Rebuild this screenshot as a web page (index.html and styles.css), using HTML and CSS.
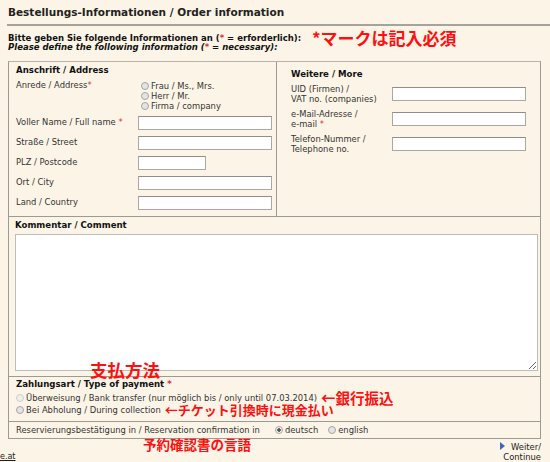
FILE: index.html
```html
<!DOCTYPE html>
<html lang="de">
<head>
    <meta charset="UTF-8">
    <title>Bestellungs-Informationen</title>
    <link rel="stylesheet" href="styles.css">
</head>
<body>
    <h1 class="title">Bestellungs-Informationen / Order information</h1>
    <div class="intro">
        <p>Bitte geben Sie folgende Informationen an (<span class="req">*</span> = erforderlich):</p>
        <p class="en">Please define the following information (<span class="req">*</span> = necessary):</p>
        <span class="note note-req">*マークは記入必須</span>
    </div>

    <div class="box">
        <div class="top">
            <div class="address">
                <h2>Anschrift / Address</h2>
                <div class="field salutation">
                    <label>Anrede / Address<span class="req">*</span></label>
                    <div class="options">
                        <div class="opt"><span class="radio"></span>Frau / Ms., Mrs.</div>
                        <div class="opt"><span class="radio"></span>Herr / Mr.</div>
                        <div class="opt"><span class="radio"></span>Firma / company</div>
                    </div>
                </div>
                <div class="field"><label>Voller Name / Full name <span class="req">*</span></label><input type="text"></div>
                <div class="field"><label>Straße / Street</label><input type="text"></div>
                <div class="field"><label>PLZ / Postcode</label><input type="text" class="short"></div>
                <div class="field"><label>Ort / City</label><input type="text"></div>
                <div class="field"><label>Land / Country</label><input type="text"></div>
            </div>
            <div class="more">
                <h2>Weitere / More</h2>
                <div class="field"><label>UID (Firmen) /<br>VAT no. (companies)</label><input type="text"></div>
                <div class="field"><label>e-Mail-Adresse /<br>e-mail <span class="req">*</span></label><input type="text"></div>
                <div class="field"><label>Telefon-Nummer /<br>Telephone no.</label><input type="text"></div>
            </div>
        </div>

        <div class="comment">
            <h2>Kommentar / Comment</h2>
            <textarea></textarea>
        </div>

        <div class="payment">
            <span class="note note-pay">支払方法</span>
            <h2>Zahlungsart / Type of payment <span class="req">*</span></h2>
            <div class="opt disabled"><span class="radio"></span>Überweisung / Bank transfer (nur möglich bis / only until 07.03.2014)<span class="note-inline big">←銀行振込</span></div>
            <div class="opt"><span class="radio"></span>Bei Abholung / During collection<span class="note-inline">←チケット引換時に現金払い</span></div>
        </div>

        <div class="confirm">
            <span class="confirm-label">Reservierungsbestätigung in / Reservation confirmation in</span>
            <span class="opt"><span class="radio checked"></span>deutsch</span>
            <span class="opt"><span class="radio"></span>english</span>
            <span class="note note-lang">予約確認書の言語</span>
        </div>
    </div>

    <div class="footer">
        <a href="#" class="link">e.at</a>
        <a href="#" class="next"><span class="arrow"></span>Weiter/<br>Continue</a>
    </div>
</body>
</html>
```

FILE: styles.css
```css
body {
    margin: 0;
    background-color: #fcf5e7;
    font-family: "DejaVu Sans", Verdana, sans-serif;
    font-size: 8.4px;
    color: #333;
}
.title {
    margin: 0 0 0 7px;
    padding: 6px 0 6px 1px;
    font-size: 10.5px;
    color: #222;
    border-bottom: 2px solid #a6a39d;
}
.intro {
    position: relative;
    margin: 8px 8px 0;
    font-size: 8.5px;
    font-weight: bold;
    color: #111;
}
.intro p {
    margin: 0;
    line-height: 9px;
}
.intro .en {
    font-style: italic;
}
.req {
    color: #e0303a;
}
.note, .note-inline {
    font-family: "Noto Sans CJK JP", sans-serif;
    font-weight: bold;
    color: #ff1010;
}
.note {
    position: absolute;
    white-space: nowrap;
}
.note-req {
    left: 304px;
    top: -9px;
    font-size: 17px;
}

.box {
    margin: 9px 9px 0 8px;
    border: 1px solid #9c9a95;
    border-top-color: #b5b2ab;
}
h2 {
    margin: 0;
    font-size: 8.6px;
    color: #111;
}
.top {
    display: grid;
    grid-template-columns: 268px 1fr;
    height: 154px;
    border-bottom: 1px solid #9c9a95;
}
.address {
    padding: 3px 0 0 7px;
    border-right: 1px solid #9c9a95;
}
.more {
    padding: 7px 0 0 14px;
}
.field {
    display: flex;
    align-items: flex-start;
    margin-top: 6px;
}
.field label {
    width: 122px;
    flex: none;
    padding-top: 1px;
}
.address h2 + .field {
    margin-top: 5px;
}
.salutation {
    margin-bottom: -1px;
}
.salutation label {
    padding-top: 0;
}
.more .field {
    align-items: center;
    margin-top: 5px;
}
.more h2 + .field {
    margin-top: 5px;
}
.more .field label {
    width: 101px;
    padding-top: 0;
    line-height: 10px;
}
input[type="text"] {
    box-sizing: border-box;
    width: 134px;
    height: 14px;
    margin: 0;
    padding: 0 2px;
    border: 1px solid #a9a8a4;
    border-top-color: #8f8e8b;
    background: #fff;
}
input.short {
    width: 68px;
}
.salutation .options {
    padding: 1px 0 0 3px;
}
.opt {
    display: flex;
    align-items: center;
    line-height: 10px;
    white-space: nowrap;
}
.radio {
    display: inline-block;
    box-sizing: border-box;
    width: 8px;
    height: 8px;
    margin-right: 2px;
    border: 1px solid #a5a5a5;
    border-radius: 50%;
    background: #e4e4e4;
}
.radio.checked {
    background: radial-gradient(circle, #555 0 1.5px, #f3f3f3 2px);
}
.disabled .radio {
    border-color: #cfcfcf;
    background: #eeeeea;
}

.comment {
    height: 156px;
    padding: 3px 0 0 6px;
    border-bottom: 1px solid #9c9a95;
}
textarea {
    display: block;
    box-sizing: border-box;
    width: 523px;
    height: 137px;
    margin-top: 4px;
    border: 1px solid #bdbcb8;
    background: #fff;
    resize: vertical;
}
.payment {
    position: relative;
    height: 44px;
    padding: 0 0 0 7px;
    border-bottom: 1px solid #9c9a95;
    box-sizing: border-box;
}
.payment h2 {
    line-height: 12px;
    margin: 1px 0 2px;
}
.payment .opt {
    height: 12px;
    line-height: 12px;
}
.note-inline {
    margin-left: 4px;
    font-size: 13px;
    line-height: 12px;
}
.note-inline.big {
    font-size: 14.5px;
}
.note-pay {
    left: 81px;
    top: -21px;
    font-size: 17.5px;
}
.confirm {
    position: relative;
    display: flex;
    align-items: center;
    height: 16px;
    padding-left: 7px;
}
.confirm-label {
    margin-right: 15px;
}
.confirm .opt {
    margin-right: 10px;
}
.note-lang {
    left: 134px;
    top: 12px;
    font-size: 13.5px;
}
.footer {
    display: flex;
    justify-content: space-between;
    align-items: flex-start;
    margin: 3px 9px 0 0;
}
.footer a {
    color: #222;
}
.link {
    margin-top: 10px;
    font-size: 8px;
}
.next {
    text-align: right;
    text-decoration: none;
    line-height: 10px;
}
.arrow {
    display: inline-block;
    width: 0;
    height: 0;
    margin-right: 6px;
    border-left: 5px solid #3a66c8;
    border-top: 4px solid transparent;
    border-bottom: 4px solid transparent;
}
```
